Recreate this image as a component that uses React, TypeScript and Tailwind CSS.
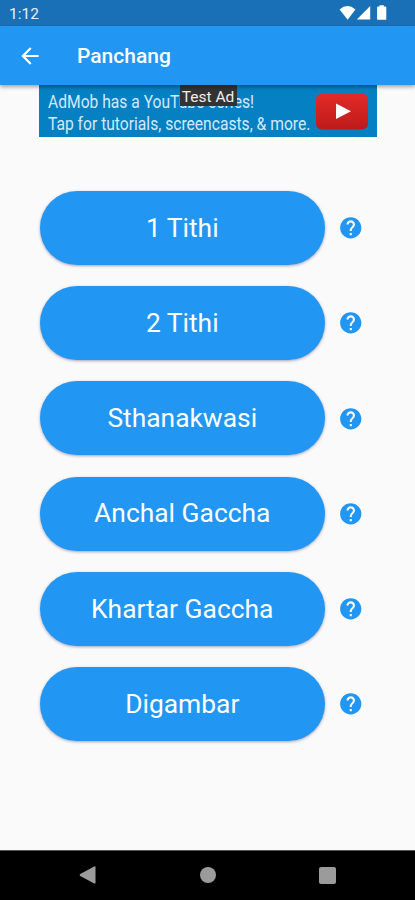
import { MdArrowBack, MdHelp } from "react-icons/md";

const sects = [
  "1 Tithi",
  "2 Tithi",
  "Sthanakwasi",
  "Anchal Gaccha",
  "Khartar Gaccha",
  "Digambar",
];

function StatusBar() {
  return (
    <div className="flex h-[26px] items-center justify-between bg-[#1a70b7] pr-[28px] pl-[9px] text-[#e4f0fa]">
      <span className="pt-[3px] text-[15.5px] leading-none">1:12</span>
      <svg width="48" height="18" viewBox="339 4 48 18" fill="#fff">
        <path d="M339.6 9.4Q347.6 2.8 355.4 9.4L347.7 19.8Z" />
        <path d="M370.2 6V19.6H356.8Z" />
        <path d="M379.6 6.6V5.2H383.8V6.6H385.4Q386.3 6.6 386.3 7.5V18.9Q386.3 19.8 385.4 19.8H378Q377.1 19.8 377.1 18.9V7.5Q377.1 6.6 378 6.6Z" />
      </svg>
    </div>
  );
}

function AppBar() {
  return (
    <header className="relative z-10 flex h-[59px] items-center bg-[#2196f3] pl-[17px] text-white shadow-[0_2px_4px_rgba(0,0,0,0.35)]">
      <MdArrowBack size={26} />
      <h1 className="ml-[34px] pt-[2px] text-[21px] leading-none font-medium">Panchang</h1>
    </header>
  );
}

function AdBanner() {
  return (
    <div className="relative mx-auto flex h-[52px] w-[338px] items-center justify-between bg-[#0580c2] pr-[9px] pl-[9px]">
      <div className="w-[262px] pt-[4px] text-[17.5px] leading-[22.5px] whitespace-nowrap text-[#d3eafa]">
        <p className="w-max origin-left scale-x-[0.893]">AdMob has a YouTube series!</p>
        <p className="w-max origin-left scale-x-[0.893]">Tap for tutorials, screencasts, &amp; more.</p>
      </div>
      <svg width="52" height="37" viewBox="0 0 52 37">
        <defs>
          <linearGradient id="play" x1="0" y1="0" x2="0" y2="1">
            <stop offset="0" stopColor="#e32b26" />
            <stop offset="1" stopColor="#bd1a1b" />
          </linearGradient>
        </defs>
        <rect y="0.5" width="52" height="36" rx="6" fill="url(#play)" />
        <path d="M20 10.5L35 18.2L20 26Z" fill="#fff" />
      </svg>
      <span className="absolute top-0 left-[141px] flex h-[21px] w-[57px] items-center justify-center bg-[#333] pt-[4px] text-[15.5px] leading-none whitespace-nowrap text-[#eee]">
        Test Ad
      </span>
    </div>
  );
}

function SectRow({ name }: { name: string }) {
  return (
    <li className="flex items-center gap-[12.75px]">
      <button className="h-[74px] w-[285.5px] rounded-full bg-[#2196f3] text-[26.4px] leading-none text-white shadow-[0_1px_3px_rgba(40,30,90,0.4)]">
        {name}
      </button>
      <MdHelp size={25.5} className="text-[#2196f3]" />
    </li>
  );
}

function NavBar() {
  return (
    <nav className="flex h-[50px] items-center justify-between border-t border-[#555] bg-black pr-[79px] pb-px pl-[79px]">
      <svg width="17" height="18" viewBox="0 0 17 18" fill="#9b9b9b">
        <path d="M15.2 0.5Q16.5 0 16.5 1.3V16.7Q16.5 18 15.2 17.4L1.2 9.9Q0 9 1.2 8.1Z" />
      </svg>
      <span className="h-4 w-4 rounded-full bg-[#9b9b9b]" />
      <span className="h-[17px] w-[17px] rounded-[2px] bg-[#9b9b9b]" />
    </nav>
  );
}

export default function App() {
  return (
    <div className="flex h-[900px] w-[415px] flex-col overflow-hidden bg-[#fafafa] font-['Roboto',sans-serif]">
      <StatusBar />
      <AppBar />
      <main className="flex-1">
        <AdBanner />
        <ul className="mt-[54px] ml-[39.5px] flex flex-col gap-[21.2px]">
          {sects.map((name) => (
            <SectRow key={name} name={name} />
          ))}
        </ul>
      </main>
      <NavBar />
    </div>
  );
}
